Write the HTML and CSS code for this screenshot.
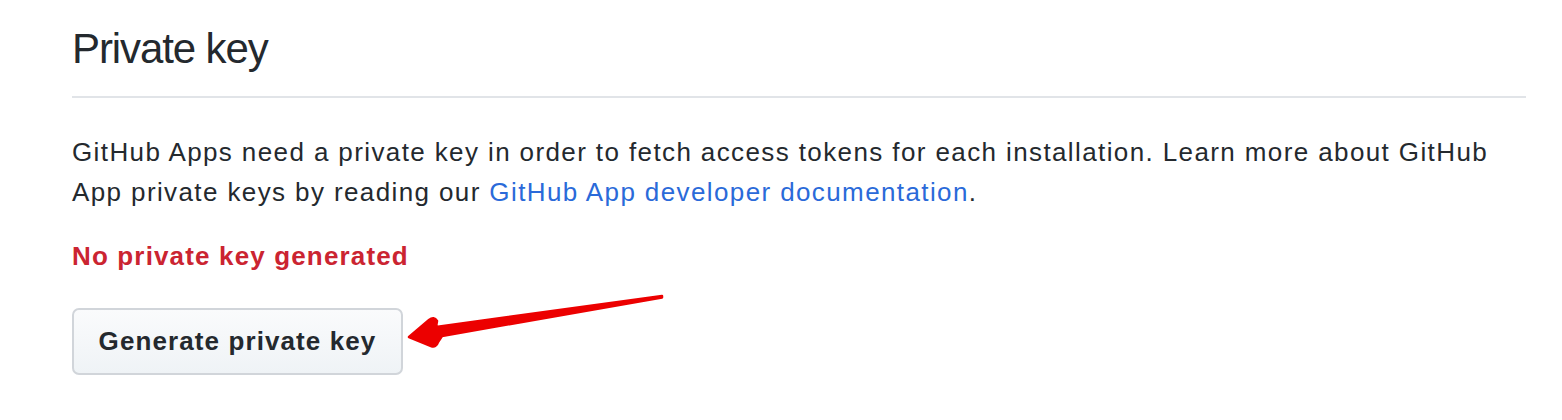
FILE: index.html
```html
<!DOCTYPE html>
<html>
<head>
<meta charset="utf-8">
<link rel="stylesheet" href="styles.css">
</head>
<body>
<div class="page">
  <div class="subhead">
    <h2 class="subhead-heading">Private key</h2>
  </div>
  <p class="intro">GitHub Apps need a private key in order to fetch access tokens for each installation. Learn more about GitHub App private keys by reading our <a href="#">GitHub App developer documentation</a>.</p>
  <p class="status">No private key generated</p>
  <div class="actions">
    <button class="btn">Generate private key</button>
    <svg class="arrow" width="280" height="60" viewBox="0 0 280 60">
      <path d="M3 43 L23 26 Q28 22 31 27 L30 33 L256 2 L256 3.5 L36 42 L32 48 Q30 54 25 52 Z" fill="#ec0000" stroke="#ec0000" stroke-width="2.5" stroke-linejoin="round"/>
    </svg>
  </div>
</div>
</body>
</html>
```
FILE: styles.css
```css
html, body {
  margin: 0;
  padding: 0;
  background: #ffffff;
}
.page {
  width: 1454px;
  padding: 23px 0 0 72px;
  font-family: "Liberation Sans", Arial, Helvetica, sans-serif;
  color: #24292e;
}
.subhead {
  border-bottom: 2px solid #e1e4e8;
  padding-bottom: 21px;
}
.subhead-heading {
  margin: 0;
  font-size: 42px;
  font-weight: 400;
  line-height: 52px;
  letter-spacing: -1.1px;
}
.intro {
  margin: 34px 0 0 0;
  font-size: 26px;
  line-height: 40px;
  letter-spacing: 1.39px;
}
.intro a {
  color: #2a6ad9;
  text-decoration: none;
}
.status {
  margin: 24px 0 0 0;
  font-size: 26px;
  line-height: 40px;
  font-weight: 700;
  letter-spacing: 1.15px;
  color: #cb2431;
}
.actions {
  position: relative;
  margin-top: 32px;
  display: flex;
}
.btn {
  height: 67px;
  width: 331px;
  padding: 0;
  font-family: "Liberation Sans", Arial, Helvetica, sans-serif;
  font-size: 26px;
  font-weight: 700;
  letter-spacing: 1.1px;
  color: #24292e;
  background: linear-gradient(#fafbfc, #eff3f6);
  border: 2px solid #d1d5da;
  border-radius: 7px;
}
.arrow {
  position: absolute;
  left: 334px;
  top: -14px;
}
```
